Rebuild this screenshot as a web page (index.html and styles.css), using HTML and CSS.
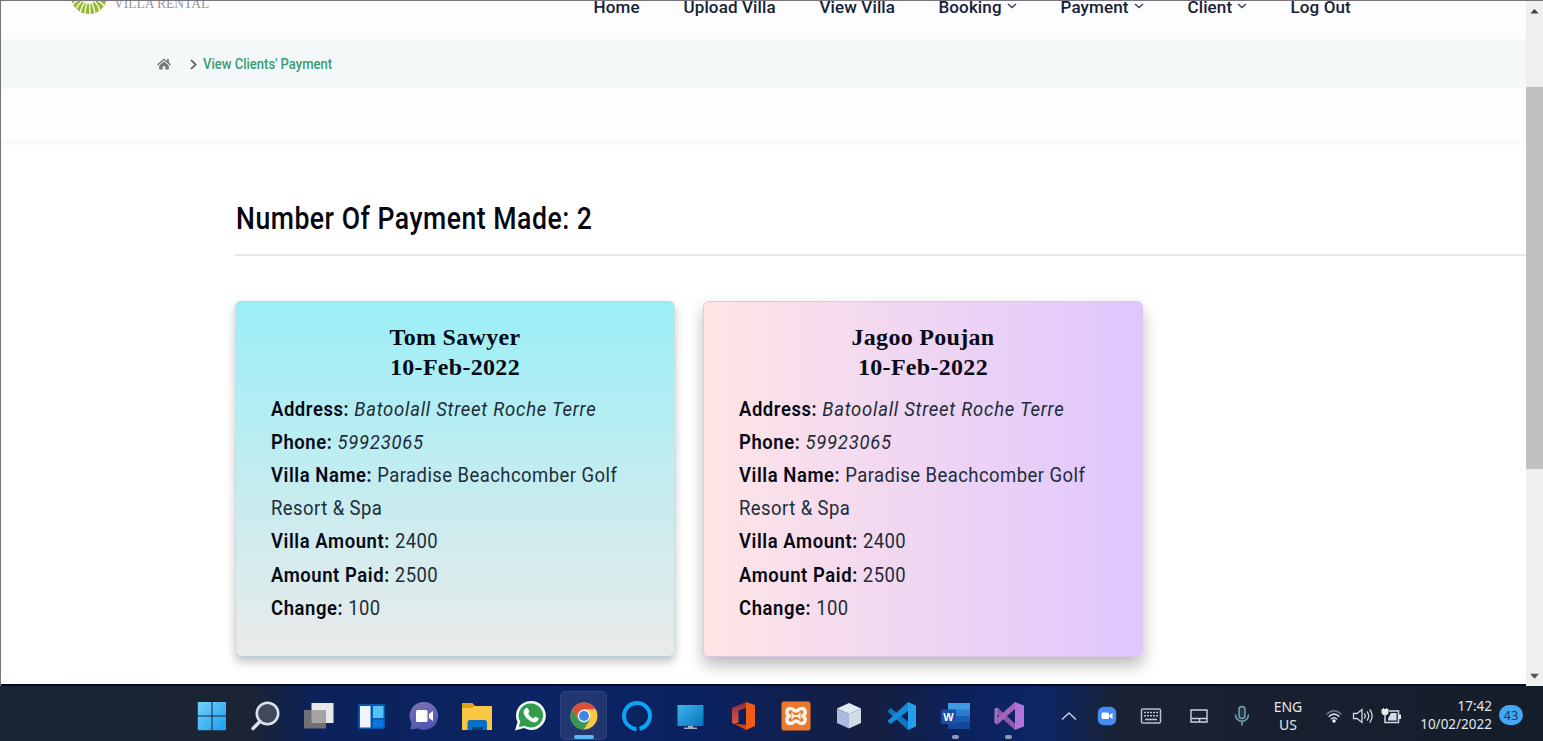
FILE: index.html
```
<!DOCTYPE html>
<html lang="en">
<head>
<meta charset="utf-8">
<title>View Clients' Payment</title>
<link rel="stylesheet" href="styles.css">
</head>
<body>
<div class="screen">
  <div class="browser">
    <div class="page">
      <header class="site-header">
        <div class="brand">
          <svg class="brand-logo" width="36" height="36" viewBox="0 0 36 36"><circle cx="18" cy="18" r="18" fill="#94b834"/><g stroke="#f5f8e4" stroke-width="1.4"><path d="M18 18Q6 21 1 27M18 18Q8 24 5 31M18 18Q11 26 9 35M18 18Q14 28 14 37M18 18Q19 28 19 37M18 18Q23 28 24 36M18 18Q27 25 29 33M18 18Q30 23 34 29" fill="none"/></g><circle cx="18" cy="18" r="8" fill="#eff3df"/></svg>
          <span class="brand-name">VILLA RENTAL</span>
        </div>
        <nav class="nav">
          <a><span>Home</span></a>
          <a><span>Upload Villa</span></a>
          <a><span>View Villa</span></a>
          <a><span>Booking</span><svg class="caret" viewBox="0 0 10 6"><path d="M1 1l4 3.6L9 1"/></svg></a>
          <a><span>Payment</span><svg class="caret" viewBox="0 0 10 6"><path d="M1 1l4 3.6L9 1"/></svg></a>
          <a><span>Client</span><svg class="caret" viewBox="0 0 10 6"><path d="M1 1l4 3.6L9 1"/></svg></a>
          <a><span>Log Out</span></a>
        </nav>
      </header>
      <div class="crumbs">
        <svg class="home" viewBox="0 0 14 12"><path d="M7 .5 0 6.4l.9 1L7 2.3l6.100 5.100.9-1L11.800 4.500V1H10v2zM7 3.400 2.200 7.400V11.500H5.700V8.300h2.600v3.200h3.500V7.400z" fill="#777"/></svg>
        <svg class="arrow" viewBox="0 0 7 11"><path d="M1 1l4.600 4.500L1 10" fill="none" stroke="#555" stroke-width="1.700"/></svg>
        <span class="crumb">View Clients' Payment</span>
      </div>
      <div class="band"></div>
      <main class="content">
        <h1 class="heading"><span>Number Of Payment Made: 2</span></h1>
        <div class="cards">
          <article class="card card-aqua">
            <h2 class="card-title">Tom Sawyer<br>10-Feb-2022</h2>
            <div class="details">
              <p><b>Address:</b> <i>Batoolall Street Roche Terre</i></p>
              <p><b>Phone:</b> <i>59923065</i></p>
              <p><b>Villa Name:</b> Paradise Beachcomber Golf<br>Resort &amp; Spa</p>
              <p><b>Villa Amount:</b> 2400</p>
              <p><b>Amount Paid:</b> 2500</p>
              <p><b>Change:</b> 100</p>
            </div>
          </article>
          <article class="card card-pink">
            <h2 class="card-title">Jagoo Poujan<br>10-Feb-2022</h2>
            <div class="details">
              <p><b>Address:</b> <i>Batoolall Street Roche Terre</i></p>
              <p><b>Phone:</b> <i>59923065</i></p>
              <p><b>Villa Name:</b> Paradise Beachcomber Golf<br>Resort &amp; Spa</p>
              <p><b>Villa Amount:</b> 2400</p>
              <p><b>Amount Paid:</b> 2500</p>
              <p><b>Change:</b> 100</p>
            </div>
          </article>
        </div>
      </main>
    </div>
    <div class="scrollbar">
      <svg class="sb-up" viewBox="0 0 10 6"><path d="M0 5.500 5 0l5 5.500z" fill="#444"/></svg>
      <div class="thumb"></div>
      <svg class="sb-down" viewBox="0 0 10 6"><path d="M0 .5h10L5 6z" fill="#555"/></svg>
    </div>
  </div>
  <footer class="taskbar">
    <div class="apps">
      <div class="app"><svg width="30" height="30" viewBox="0 0 30 30"><defs><linearGradient id="win" x2="1" y2="1"><stop stop-color="#74d3fc"/><stop offset="1" stop-color="#1b9bf2"/></linearGradient></defs><path d="M.8 1h13.700v13.500H.8zM15.500 1H29v13.500H15.500zM.8 15.500h13.700v13.700H.8zM15.500 15.500H29v13.700H15.500z" fill="url(#win)"/></svg></div>
      <div class="app"><svg width="30" height="30" viewBox="0 0 30 30"><circle cx="17.500" cy="12.500" r="10.700" fill="#414a5d" stroke="#dce2ec" stroke-width="2.600"/><path d="M10 20.500 3 27.500" stroke="#dce2ec" stroke-width="3.400" stroke-linecap="round"/></svg></div>
      <div class="app"><svg width="32" height="30" viewBox="0 0 32 30"><path d="M9.500 2h22v20h-22z" fill="#e9e9ec"/><path d="M2 9h22v18.500H2z" fill="#707074"/><path d="M9.500 9H24v13H9.500z" fill="#a5a3a3"/></svg></div>
      <div class="app"><svg width="28" height="28" viewBox="0 0 28 28"><rect x="1" y="2" width="27" height="25" rx="1.500" fill="#0758ad"/><path d="M3 4h10.500v21.500H3z" fill="#f0f4fc"/><path d="M16 4h10.500v12H16z" fill="#56c2f7"/><path d="M16 17.500h10.500v8H16z" fill="#0878dc"/></svg></div>
      <div class="app"><svg width="30" height="30" viewBox="0 0 30 30"><defs><linearGradient id="chat" y2="1" x2=".3"><stop stop-color="#7f74b8"/><stop offset="1" stop-color="#5058b0"/></linearGradient></defs><path d="M15 1a14 14 0 1 1-6 26.600L1.500 28.500l1-6.500A14 14 0 0 1 15 1z" fill="url(#chat)"/><rect x="7" y="9" width="11.500" height="12" rx="1.500" fill="#fff"/><path d="M20 13l4-3v10l-4-3z" fill="#fff"/></svg></div>
      <div class="app"><svg width="32" height="30" viewBox="0 0 32 30"><path d="M1 2h10l3 3h17v24H1z" fill="#fac744"/><path d="M1 2h10l3 3-3 2H1z" fill="#e1a11c"/><path d="M6.500 29v-7.500Q6.500 19 9 19h14.500Q26 19 26 21.500V29z" fill="#0870c2"/><path d="M11 26h11v3H11z" fill="#064980"/></svg></div>
      <div class="app"><svg width="32" height="32" viewBox="0 0 32 32"><path d="M17 1a14.500 14.500 0 1 1-7 27L1 30.500 3.500 22A14.500 14.500 0 0 1 17 1z" fill="#f3fbf4"/><path d="M17 3.500a12 12 0 1 1-6.300 22.200L4.800 27l1.500-5.500A12 12 0 0 1 17 3.500z" fill="#319c4b"/><path d="M11.500 8.500c1.500-1 2.600-.5 3.300 1.500.7 2 .8 1.900-.7 3.600 1.200 2.300 2.800 3.800 5.200 4.800 1.900-2.200 1.800-2.100 3.900-1 2 .9 1.600 1.200 1 2.900-.8 1.800-3.300 2.500-5.700 1.700-4.700-1.600-8-5.300-8.800-8.900-.4-2 .5-3.600 1.800-4.600z" fill="#fff"/></svg></div>
      <div class="app app-active"><svg width="28" height="28" viewBox="0 0 28 28"><circle cx="14" cy="14" r="13.500" fill="#f9c846"/><path d="M14 14 2.300 7.200A13.500 13.500 0 0 1 25.700 7.200L14 7.200z" fill="#dc4f3c"/><path d="M2.300 7.200A13.500 13.500 0 0 0 13.800 27.500L20 17.500 14 14 8 16z" fill="#3b9556"/><path d="M2.300 7.200h23.400H14L8 17z" fill="#dc4f3c"/><circle cx="14" cy="14" r="6.400" fill="#eef2fa"/><circle cx="14" cy="14" r="4.900" fill="#3f84e7"/></svg><i class="run-active"></i></div>
      <div class="app"><svg width="30" height="30" viewBox="0 0 30 30"><path d="M14.500 28.500C6 26.500 2 21 2 15a13 13 0 1 1 15.500 12.700" fill="none" stroke="#0ca4f4" stroke-width="4"/></svg></div>
      <div class="app"><svg width="28" height="28" viewBox="0 0 28 28"><defs><linearGradient id="pc" x2="1" y2="1"><stop stop-color="#3db6ea"/><stop offset="1" stop-color="#0872bd"/></linearGradient></defs><path d="M1.500 3h26v21h-26z" fill="url(#pc)"/><path d="M12 24h5v1.500h4V27H8v-1.500h4z" fill="#a2b3c6"/></svg></div>
      <div class="app"><svg width="28" height="30" viewBox="0 0 28 30"><defs><linearGradient id="off" y2="1" x2="0"><stop stop-color="#8f2c3a"/><stop offset="1" stop-color="#d9574a"/></linearGradient></defs><path d="M3 7 17 1v6L9.500 9.500v12L5 23l-2-1z" fill="url(#off)"/><path d="M17 1l9 3v21l-9 4V6z" fill="#ee5c16"/><path d="M5 22.500 17 24v5z" fill="#d44320"/></svg></div>
      <div class="app"><svg width="30" height="30" viewBox="0 0 30 30"><rect x=".5" y=".5" width="29" height="29" rx="2.500" fill="#ea792d"/><path d="M9.500 7.500c-4 0-5 5-1.500 7.500-3.500 2.500-2.500 7.500 1.500 7.500 3 0 3-2.500 5.500-2.500s2.500 2.500 5.500 2.500c4 0 5-5 1.500-7.500 3.500-2.500 2.500-7.500-1.500-7.500-3 0-3 2.500-5.500 2.500s-2.500-2.500-5.500-2.500z" fill="none" stroke="#fff3e8" stroke-width="3.500"/><path d="M10.500 12l2 3-2 3M19.500 12l-2 3 2 3M12 15h6" fill="none" stroke="#fff3e8" stroke-width="2"/></svg></div>
      <div class="app"><svg width="28" height="30" viewBox="0 0 28 30"><path d="M14 2 26 7.500 14 13 2 7.500z" fill="#e2eaf2"/><path d="M2 7.500 14 13v14.500L2 22z" fill="#a9bce0"/><path d="M26 7.500 14 13v14.500L26 22z" fill="#d1dde6"/></svg></div>
      <div class="app"><svg width="32" height="30" viewBox="0 0 32 30"><path d="M22 1v28L1.500 10.500 4.500 7 22 20.500z" fill="#1275bd"/><path d="M22 1v9L4.500 23 1.500 20z" fill="#158bd6"/><path d="M22 1l8 3.500v21L22 29z" fill="#259deb"/></svg></div>
      <div class="app"><svg width="32" height="30" viewBox="0 0 32 30"><path d="M8 2h22v7H8z" fill="#4099e4"/><path d="M8 8.500h22v7H8z" fill="#2b7dd2"/><path d="M8 15h22v6.500H8z" fill="#195cb4"/><path d="M8 21.500h22V28H8z" fill="#15479a"/><rect x="1" y="8.500" width="15" height="14.500" rx="1" fill="#174ea6"/><text class="word-letter" x="8.500" y="19.500" text-anchor="middle">W</text></svg><i class="run"></i></div>
      <div class="app"><svg width="32" height="30" viewBox="0 0 32 30"><path d="M1.500 8 4.500 6.500 22 22.500V29L4.500 13.500z" fill="#8856ad"/><path d="M1.500 8 4.500 6.500v17L1.500 22z" fill="#a274c4"/><path d="M4.500 23.500 22 8V1L4.500 16.500z" fill="#a366bc"/><path d="M22 1l9 3.500v21L22 29z" fill="#b275d7"/></svg><i class="run"></i></div>
    </div>
    <div class="tray">
      <svg width="18" height="12" viewBox="0 0 18 12"><path d="M2 9.500 9 3l7 6.500" fill="none" stroke="#ccd3df" stroke-width="1.400"/></svg>
      <svg width="20" height="20" viewBox="0 0 20 20"><rect x=".8" y=".8" width="18.400" height="18.400" rx="6" fill="#468cf3"/><rect x="4.500" y="6.500" width="7.500" height="6.500" rx="1.500" fill="#fff"/><path d="M12.500 9l3-2v6l-3-2z" fill="#fff"/></svg>
      <svg width="22" height="18" viewBox="0 0 22 18"><rect x="1.500" y="2" width="19" height="14" rx="1.500" fill="none" stroke="#bbc2cd" stroke-width="1.500"/><path d="M4 5.500h14M4 8.800h14" stroke="#bbc2cd" stroke-width="1.600" stroke-dasharray="2 1"/><path d="M5 12.500h12" stroke="#bbc2cd" stroke-width="1.600"/></svg>
      <svg width="20" height="18" viewBox="0 0 20 18"><path d="M2 3h16v12H2zM2 11.500h16M10.500 11.500V15" fill="none" stroke="#cbd0d9" stroke-width="1.400"/></svg>
      <svg width="18" height="22" viewBox="0 0 18 22"><rect x="6" y="1.500" width="6" height="12" rx="3" fill="#253a49" stroke="#79a3b4" stroke-width="1.500"/><path d="M2.500 9.500c0 9 13 9 13 0M9 16v4.500" fill="none" stroke="#79a3b4" stroke-width="1.500"/></svg>
      <div class="lang">ENG<br>US</div>
      <svg width="18" height="16" viewBox="0 0 18 16"><g fill="none" stroke-width="1.500"><path d="M1.500 6.500Q9-1 16.500 6.500" stroke="#6d7785"/><path d="M3.700 8.800Q9 3.500 14.300 8.800M6 11.200Q9 8.200 12 11.200" stroke="#dce1e8"/></g><circle cx="9" cy="13" r="1.700" fill="#fff"/></svg>
      <svg width="22" height="18" viewBox="0 0 22 18"><path d="M1.500 6.500H5L10 2.500v13L5 11.500H1.500zM12.300 6.500q2 2.500 0 5M15 4.500q3.500 4.500 0 9M17.700 2.500q5 6.500 0 13" fill="none" stroke="#d0d6df" stroke-width="1.300"/></svg>
      <svg width="22" height="18" viewBox="0 0 22 18"><path d="M8 11.500 11 6h5.500v7.500H8z" fill="#d5dae2"/><path d="M5 8v7.500H18.500V4H9" fill="none" stroke="#d5dae2" stroke-width="1.500"/><path d="M19 7.500h2v4.500h-2zM1.500 2h1.500v-1h1v1h2v-1h1v1h1.500v4L7 8H3L1.500 6z" fill="#e8ecf1"/></svg>
      <div class="clock">17:42<br>10/02/2022</div>
      <div class="badge">43</div>
    </div>
  </footer>
</div>
</body>
</html>
```
FILE: styles.css
```
* { box-sizing: border-box; }
body { margin: 0; font-family: Roboto, "Open Sans", sans-serif; }
h1, h2, p { margin: 0; }
svg { display: block; flex: none; }
.screen { width: 1543px; height: 741px; display: flex; flex-direction: column; overflow: hidden; background: #060a26; }
.browser { display: flex; height: 686px; flex: none; border-top: 1px solid #77747b; border-left: 1px solid #77747b; }
.page { flex: 1; height: 683px; background: #fff; overflow: hidden; }

.site-header { height: 38px; background: #fdfcfe; display: flex; align-items: flex-start; overflow: hidden; }
.brand { width: 592.500px; padding-left: 70px; display: flex; flex: none; }
.brand-logo { margin-top: -23px; }
.brand-name { margin: -7px 0 0 7px; font: 15.500px/18px "Liberation Serif", serif; color: #969696; white-space: nowrap; transform: scaleX(.87); transform-origin: left; }
.nav { display: grid; grid-template-columns: 90px 136px 119px 122px 127px 103px 90px; margin-top: -6px; line-height: 24px; font-size: 17px; font-weight: 500; letter-spacing: .12px; color: #142238; }
.nav a { display: flex; align-items: center; gap: 5px; white-space: nowrap; }
.caret { width: 10px; height: 6px; margin-top: -2px; fill: none; stroke: #39445a; stroke-width: 1.5; }

.crumbs { height: 49px; background: #f5f8f9; padding: 1px 0 0 156px; display: flex; align-items: center; }
.home { width: 14px; height: 12px; }
.arrow { width: 7px; height: 11px; margin-left: 19px; }
.crumb { margin-left: 6px; font-size: 14.500px; font-weight: 500; color: #389d74; white-space: nowrap; transform: scaleX(.9); transform-origin: left; }
.band { height: 57px; background: #fdfcfe; border-bottom: 3px solid #f7f9fa; }

.content { padding-left: 234px; }
.heading { height: 111px; padding: 53px 0 0 1px; border-bottom: 2px solid #e7e7e8; font-size: 31px; font-weight: 500; line-height: 42px; color: #05060f; white-space: nowrap; }
.heading span { display: inline-block; letter-spacing: .6px; transform: scaleX(.858); transform-origin: left; }
.cards { display: flex; gap: 28px; padding-top: 45px; }
.card { width: 440px; height: 356px; padding: 21px 35px; border-radius: 6px; border: 1px solid; }
.card-aqua { background: linear-gradient(#9aeff6, #ebeaea); border-color: #a9dfe2 #c8dfe1 #b9d0d6; box-shadow: 0 5px 10px rgba(0, 0, 0, .24); }
.card-pink { background: linear-gradient(90deg, #ffe5e5, #dfc6ff); border-color: #dec6e9; box-shadow: 0 8px 16px rgba(0, 0, 0, .28); }
.card-title { font: bold 24px/29.500px "Liberation Serif", serif; letter-spacing: .3px; text-align: center; color: #080b18; }
.details { margin-top: 10.500px; font-size: 20.500px; line-height: 33.200px; color: #202c3a; letter-spacing: .5px; white-space: nowrap; }
.details p { transform: scaleX(.9); transform-origin: left; }
.details b { font-weight: 600; letter-spacing: .65px; color: #060714; }
.details i { letter-spacing: .85px; }

.scrollbar { width: 17px; height: 685px; background: #f0eff0; display: flex; flex-direction: column; align-items: center; }
.sb-up { width: 9px; height: 5px; margin-top: 8px; }
.thumb { width: 17px; height: 382px; margin-top: 73px; background: #c1c0c2; }
.sb-down { width: 9px; height: 6px; margin: auto 0 7px; }

.taskbar { height: 55px; display: flex; color: #e2e6ed; background: linear-gradient(90deg, #182638 0, #1b2432 250px, #0b225a 310px, #0b2464 560px, #0b2260 700px, #141e40 870px, #0b225e 970px, #0b2666 1040px, #1a2234 1120px, #151d2a 1543px); }
.apps { display: flex; width: 1050px; padding-left: 185px; }
.app { position: relative; width: 53.150px; flex: none; display: flex; align-items: center; justify-content: center; padding-top: 5px; }
.app-active::before { content: ""; position: absolute; inset: 5px 3px 1px; border-radius: 5px; background: rgba(255, 255, 255, .09); border: 1px solid rgba(255, 255, 255, .06); }
.app svg { position: relative; }
.run, .run-active { position: absolute; bottom: 2px; height: 4px; border-radius: 2px; }
.run { width: 7px; background: #929aac; }
.run-active { width: 20px; background: #59b9f5; }
.word-letter { font: bold 11px "Liberation Sans", sans-serif; fill: #fff; }
.tray { display: grid; grid-template-columns: 38px 38px 50px 46px 40px 52px 40px 18px 38px 82px 38px; align-items: center; justify-items: center; padding-top: 4px; font: 14.500px/18px "Noto Sans", sans-serif; white-space: nowrap; }
.lang { text-align: center; font-size: 14px; }
.clock { justify-self: end; text-align: right; font-size: 13.500px; margin-top: -2px; }
.badge { width: 24px; height: 20px; border-radius: 10px; background: #42a8f4; color: #12395f; text-align: center; font-size: 13px; line-height: 20px; margin-top: -2px; }
```
